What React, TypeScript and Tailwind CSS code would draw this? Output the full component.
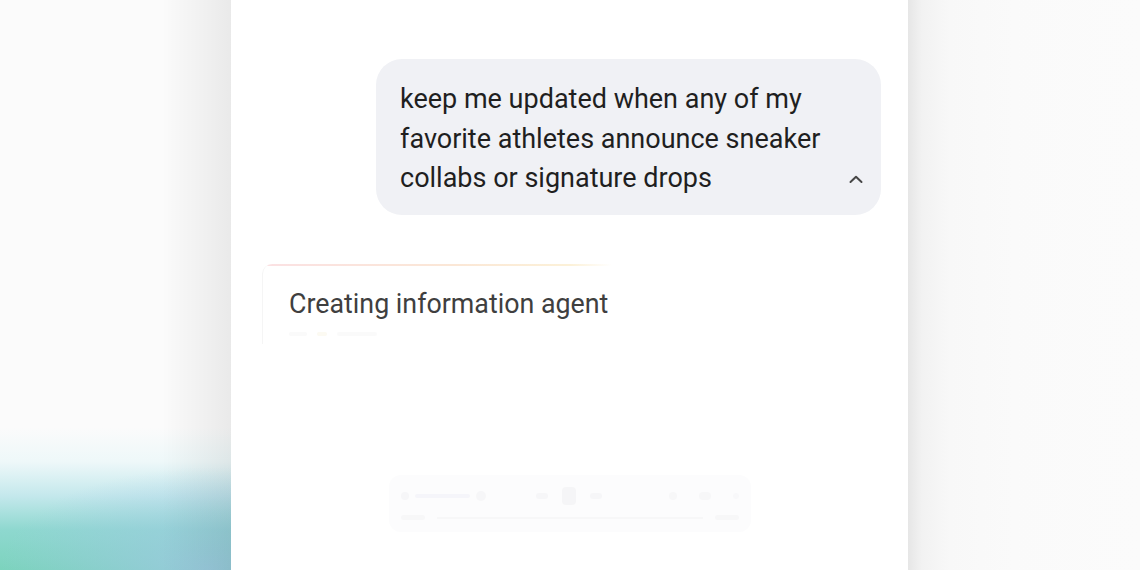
import React from 'react';

const ChevronUp: React.FC = () => (
  <svg width="16" height="10" viewBox="0 0 16 10" fill="none">
    <path d="M2.5 8L8 2.8L13.5 8" stroke="#474747" strokeWidth="2" strokeLinecap="round" strokeLinejoin="round" />
  </svg>
);

// Faded playback controls sitting behind the chat
const GhostPlayer: React.FC = () => (
  <div className="mx-auto flex w-[362px] flex-col gap-[10px] rounded-[12px] bg-[#fbfbfc] px-[12px] py-[12px] opacity-60">
    <div className="flex items-center">
      <div className="flex items-center gap-[6px]">
        <span className="h-[8px] w-[8px] rounded-full bg-[#f1f1f4]" />
        <span className="h-[4px] w-[55px] rounded-full bg-[#efeff7]" />
        <span className="h-[10px] w-[10px] rounded-full bg-[#f1f1f4]" />
      </div>
      <div className="ml-[50px] flex items-center gap-[14px]">
        <span className="h-[6px] w-[12px] rounded-sm bg-[#f1f1f4]" />
        <span className="h-[18px] w-[14px] rounded-sm bg-[#f0f0f3]" />
        <span className="h-[6px] w-[12px] rounded-sm bg-[#f1f1f4]" />
      </div>
      <div className="ml-auto flex items-center gap-[22px]">
        <span className="h-[8px] w-[8px] rounded-sm bg-[#f3f3f5]" />
        <span className="h-[8px] w-[12px] rounded-sm bg-[#f3f3f5]" />
        <span className="h-[6px] w-[6px] rounded-sm bg-[#f5f5f7]" />
      </div>
    </div>
    <div className="flex items-center gap-[12px]">
      <span className="h-[5px] w-[24px] rounded-sm bg-[#f3f3f5]" />
      <span className="h-[2px] flex-1 bg-[#f2f2f4]" />
      <span className="h-[5px] w-[24px] rounded-sm bg-[#f3f3f5]" />
    </div>
  </div>
);

const App: React.FC = () => {
  return (
    <div
      className="flex h-[570px] w-[1140px] overflow-hidden bg-white"
      style={{ fontFamily: 'Roboto, "Noto Sans", sans-serif' }}
    >
      {/* left backdrop with the teal glow */}
      <div className="h-full w-[231px] shrink-0 bg-[linear-gradient(to_right,rgba(0,0,0,0)_70%,rgba(0,0,0,0.07)_100%),radial-gradient(ellipse_90%_18%_at_90%_100%,rgba(160,200,228,0.8)_0%,rgba(160,200,228,0)_100%),linear-gradient(to_top,#7cd3bd_0%,#8ed8cf_7%,#c4e8ec_13%,#eef8f9_19%,#fbfbfb_25%)]" />

      {/* phone screen */}
      <div className="flex h-full w-[677px] shrink-0 flex-col bg-white">
        <div className="ml-auto mr-[27px] mt-[59px] flex h-[156px] w-[505px] flex-col rounded-[26px] bg-[#f0f1f5] pl-[24px] pr-[17px] pt-[21px]">
          <p className="text-[27px] leading-[39.5px] text-[#1f1f1f]">
            keep me updated when any of my
            <br />
            favorite athletes announce sneaker
            <br />
            <span className="flex items-center justify-between">
              collabs or signature drops
              <span className="flex items-center">
                <ChevronUp />
              </span>
            </span>
          </p>
        </div>

        <div className="ml-[31px] mt-[49px] w-[350px] overflow-hidden rounded-tl-[10px] border-l border-l-[#f5f5f5]">
          <div className="h-[2px] bg-[linear-gradient(to_right,#fbe1e3,#fbe7d6_55%,#fcf1d8_88%,rgba(255,255,255,0))]" />
          <div className="pl-[26px] pt-[22px]">
            <p className="whitespace-nowrap text-[26.8px] leading-[32px] text-[#3f3f3f]">Creating information agent</p>
            <div className="mt-[12px] flex items-center gap-[10px] pb-[8px] opacity-50">
              <span className="h-[4px] w-[18px] rounded-full bg-[#f6f6f6]" />
              <span className="h-[4px] w-[10px] rounded-full bg-[#fbf6e6]" />
              <span className="h-[4px] w-[40px] rounded-full bg-[#f7f7f7]" />
            </div>
          </div>
        </div>

        <div className="mt-auto mb-[38px]">
          <GhostPlayer />
        </div>
      </div>

      {/* right backdrop */}
      <div className="h-full flex-1 bg-[linear-gradient(to_right,#e6e6e6_0%,#f2f2f2_6%,#f8f8f8_18%,#fafafa_45%,#fbfbfb_100%)]" />
    </div>
  );
};

export default App;
